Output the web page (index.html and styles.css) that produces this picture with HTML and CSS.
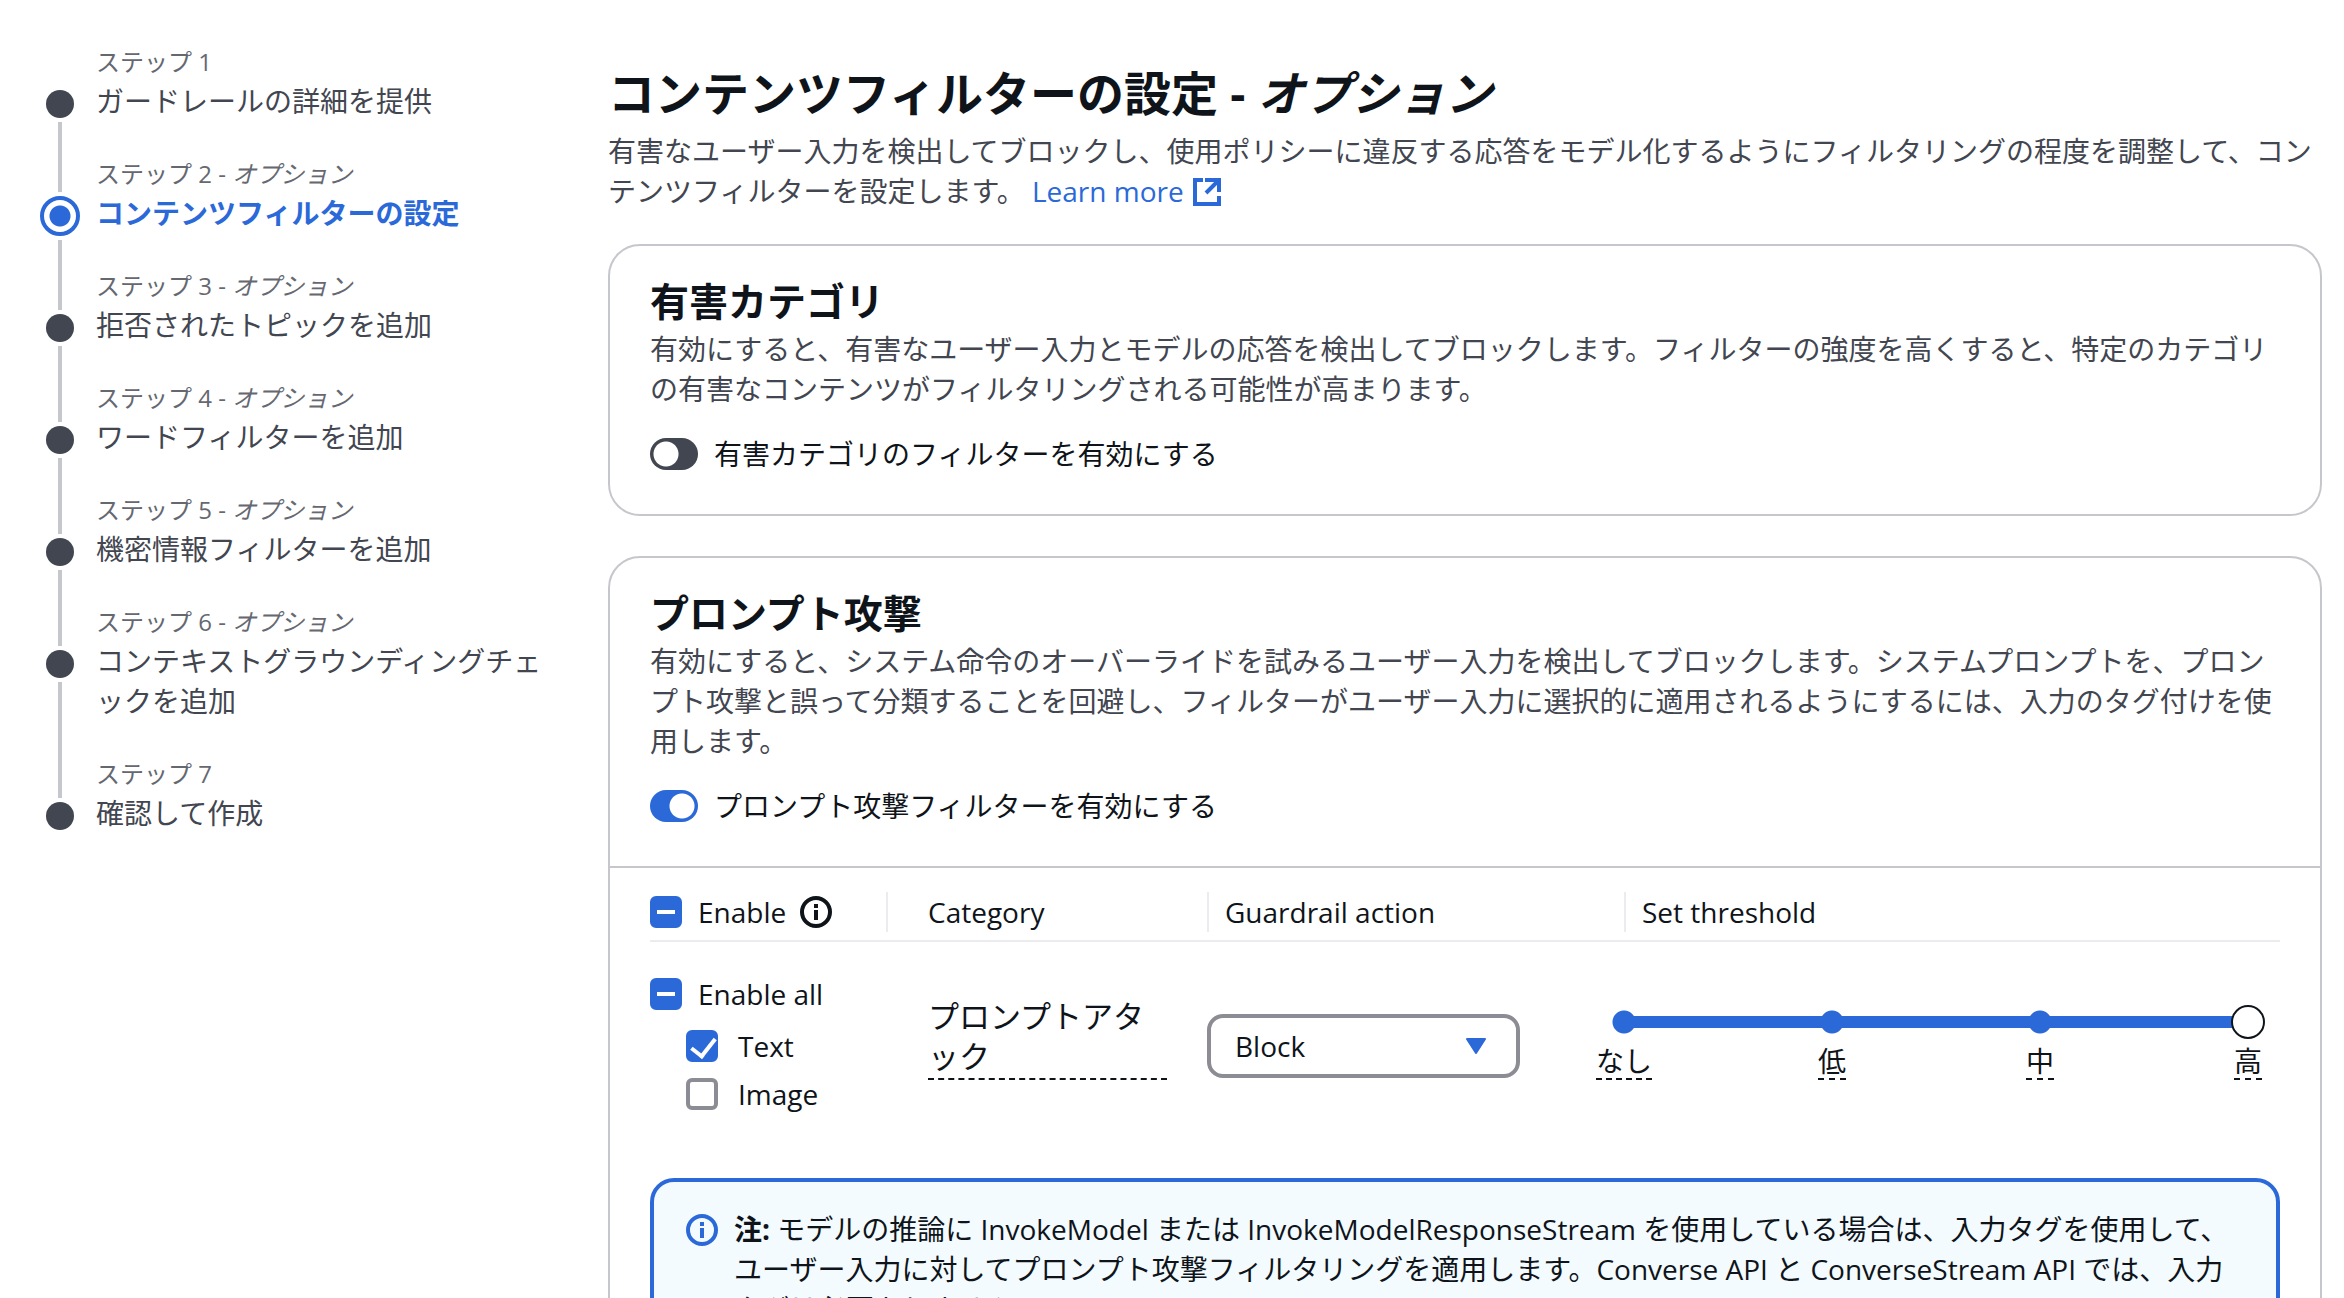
FILE: index.html
```html
<!DOCTYPE html>
<html lang="ja">
<head>
    <meta charset="UTF-8">
    <meta name="viewport" content="width=device-width, initial-scale=1.0">
    <title>コンテンツフィルターの設定</title>
    <link rel="stylesheet" href="styles.css">
</head>
<body>
    <div class="wizard">
        <nav class="steps">
            <ol>
                <li class="step">
                    <span class="marker"></span>
                    <div class="step-text">
                        <small>ステップ 1</small>
                        <a href="#">ガードレールの詳細を提供</a>
                    </div>
                </li>
                <li class="step active">
                    <span class="marker"></span>
                    <div class="step-text">
                        <small>ステップ 2 - <i>オプション</i></small>
                        <a href="#" aria-current="step">コンテンツフィルターの設定</a>
                    </div>
                </li>
                <li class="step">
                    <span class="marker"></span>
                    <div class="step-text">
                        <small>ステップ 3 - <i>オプション</i></small>
                        <a href="#">拒否されたトピックを追加</a>
                    </div>
                </li>
                <li class="step">
                    <span class="marker"></span>
                    <div class="step-text">
                        <small>ステップ 4 - <i>オプション</i></small>
                        <a href="#">ワードフィルターを追加</a>
                    </div>
                </li>
                <li class="step">
                    <span class="marker"></span>
                    <div class="step-text">
                        <small>ステップ 5 - <i>オプション</i></small>
                        <a href="#">機密情報フィルターを追加</a>
                    </div>
                </li>
                <li class="step">
                    <span class="marker"></span>
                    <div class="step-text">
                        <small>ステップ 6 - <i>オプション</i></small>
                        <a href="#">コンテキストグラウンディングチェックを追加</a>
                    </div>
                </li>
                <li class="step">
                    <span class="marker"></span>
                    <div class="step-text">
                        <small>ステップ 7</small>
                        <a href="#">確認して作成</a>
                    </div>
                </li>
            </ol>
        </nav>

        <main>
            <header class="page-header">
                <h1>コンテンツフィルターの設定 - <i>オプション</i></h1>
                <p>有害なユーザー入力を検出してブロックし、使用ポリシーに違反する応答をモデル化するようにフィルタリングの程度を調整して、コンテンツフィルターを設定します。 <a class="learn-more" href="#">Learn more
                    <svg viewBox="0 0 32 32" width="32" height="32"><path d="M12 4H4v24h24v-8M14 4h14v12M28 4L15 17"/></svg></a></p>
            </header>

            <section class="card">
                <div class="card-header">
                    <h2>有害カテゴリ</h2>
                    <p>有効にすると、有害なユーザー入力とモデルの応答を検出してブロックします。フィルターの強度を高くすると、特定のカテゴリの有害なコンテンツがフィルタリングされる可能性が高まります。</p>
                    <label class="toggle"><input type="checkbox" role="switch">有害カテゴリのフィルターを有効にする</label>
                </div>
            </section>

            <section class="card">
                <div class="card-header">
                    <h2>プロンプト攻撃</h2>
                    <p>有効にすると、システム命令のオーバーライドを試みるユーザー入力を検出してブロックします。システムプロンプトを、プロンプト攻撃と誤って分類することを回避し、フィルターがユーザー入力に選択的に適用されるようにするには、入力のタグ付けを使用します。</p>
                    <label class="toggle"><input type="checkbox" role="switch" checked>プロンプト攻撃フィルターを有効にする</label>
                </div>
                <div class="card-body">
                    <table>
                        <colgroup>
                            <col class="col-enable">
                            <col class="col-category">
                            <col class="col-action">
                            <col>
                        </colgroup>
                        <thead>
                            <tr>
                                <th>
                                    <div class="head">
                                        <label class="check"><input type="checkbox" class="mixed">Enable</label>
                                        <svg class="info" viewBox="0 0 32 32" width="32" height="32"><circle cx="16" cy="16" r="14"/><path d="M16 8v4M16 14v10"/></svg>
                                    </div>
                                </th>
                                <th><div class="head divided wide">Category</div></th>
                                <th><div class="head divided">Guardrail action</div></th>
                                <th><div class="head divided">Set threshold</div></th>
                            </tr>
                        </thead>
                        <tbody>
                            <tr>
                                <td class="cell-enable">
                                    <label class="check"><input type="checkbox" class="mixed">Enable all</label>
                                    <div class="sub-checks">
                                        <label class="check"><input type="checkbox" checked>Text</label>
                                        <label class="check"><input type="checkbox">Image</label>
                                    </div>
                                </td>
                                <td class="cell-category"><div class="category">プロンプトアタック</div></td>
                                <td class="cell-action">
                                    <div class="select">
                                        <select aria-label="Guardrail action">
                                            <option>Block</option>
                                        </select>
                                        <svg viewBox="0 0 20 16" width="20" height="16"><path d="M1 1h18l-9 14z"/></svg>
                                    </div>
                                </td>
                                <td class="cell-threshold">
                                    <div class="threshold">
                                        <div class="slider">
                                            <input type="range" min="0" max="3" value="3" aria-label="Set threshold">
                                        </div>
                                        <div class="slider-labels">
                                            <div><span>なし</span></div>
                                            <div><span>低</span></div>
                                            <div><span>中</span></div>
                                            <div><span>高</span></div>
                                        </div>
                                    </div>
                                </td>
                            </tr>
                        </tbody>
                    </table>

                    <div class="alert">
                        <svg class="info" viewBox="0 0 32 32" width="32" height="32"><circle cx="16" cy="16" r="14"/><path d="M16 8v4M16 14v10"/></svg>
                        <p><b>注:</b> モデルの推論に InvokeModel または InvokeModelResponseStream を使用している場合は、入力タグを使用して、ユーザー入力に対してプロンプト攻撃フィルタリングを適用します。Converse API と ConverseStream API では、入力タグは必要ありません。</p>
                    </div>
                </div>
            </section>
        </main>
    </div>

    <script>
        document.querySelectorAll('.mixed').forEach(box => {
            box.indeterminate = true;
        });
    </script>
</body>
</html>
```
FILE: styles.css
```css
* {
    box-sizing: border-box;
}
body {
    margin: 0;
    background-color: #fff;
    color: #0f141a;
    font-family: "Open Sans", "Noto Sans CJK JP", sans-serif;
    font-size: 28px;
    line-height: 40px;
}
h1, h2, p, ol {
    margin: 0;
    padding: 0;
}
a {
    color: inherit;
    text-decoration: none;
}
.wizard {
    display: flex;
    gap: 48px;
    padding: 46px 22px 40px 40px;
}
.steps {
    flex: 0 0 520px;
}
.steps ol {
    list-style: none;
}

/* step list */
.step {
    display: flex;
    gap: 16px;
    position: relative;
    color: #424650;
}
.step::before {
    content: "";
    position: absolute;
    left: 18px;
    top: 76px;
    bottom: -40px;
    width: 4px;
    background-color: #c6c6cd;
}
.step.active::before {
    top: 82px;
}
.step:last-child::before {
    display: none;
}
.marker {
    position: relative;
    flex: none;
    width: 28px;
    height: 28px;
    margin: 44px 6px 0;
    border-radius: 50%;
    background-color: #424650;
    box-shadow: 0 0 0 4px #fff;
}
.active .marker {
    width: 40px;
    height: 40px;
    margin: 38px 0 0;
    border: 4px solid #2b69d9;
    background: radial-gradient(circle, #2b69d9 10px, #fff 11px);
}
.step-text {
    padding-bottom: 37px;
}
.step small {
    display: block;
    margin-bottom: 3px;
    font-size: 24px;
    line-height: 32px;
    color: #656871;
}
.step a {
    display: block;
}
.active a {
    color: #2b69d9;
    font-weight: bold;
}

main {
    flex: 1;
    min-width: 0;
    display: flex;
    flex-direction: column;
    gap: 40px;
}
.page-header {
    padding-top: 17px;
    margin-bottom: -7px;
}
h1 {
    font-size: 47px;
    line-height: 60px;
    margin-bottom: 8px;
}
.page-header p, .card-header p {
    color: #424650;
}
.learn-more {
    color: #2b69d9;
    font-weight: 500;
}
.learn-more svg {
    vertical-align: -6px;
    fill: none;
    stroke: #2b69d9;
    stroke-width: 4;
}

.card {
    border: 2px solid #c6c6cd;
    border-radius: 32px;
}
.card-header {
    padding: 31px 40px 40px;
}
h2 {
    font-size: 39px;
    line-height: 48px;
    margin-bottom: 4px;
}
.toggle {
    display: flex;
    align-items: center;
    gap: 16px;
    margin-top: 25px;
}
.toggle input {
    appearance: none;
    width: 48px;
    height: 32px;
    margin: 0;
    border-radius: 16px;
    background: #424650 radial-gradient(circle at 16px 16px, #fff 12px, transparent 13px);
}
.toggle input:checked {
    background: #2b69d9 radial-gradient(circle at 32px 16px, #fff 12px, transparent 13px);
}
.card-body {
    padding: 0 40px 40px;
    border-top: 2px solid #c6c6cd;
}

/* filter table */
table {
    width: 100%;
    table-layout: fixed;
    border-collapse: separate;
    border-spacing: 0;
}
.col-enable {
    width: 236px;
}
.col-category {
    width: 321px;
}
.col-action {
    width: 417px;
}
th, td {
    padding: 0;
    text-align: left;
    vertical-align: top;
}
th {
    padding: 24px 0 8px;
    border-bottom: 2px solid #ebebf0;
    font-weight: 500;
}
.head {
    display: flex;
    align-items: center;
    gap: 14px;
    height: 40px;
}
.divided {
    padding-left: 16px;
    border-left: 2px solid #ebebf0;
}
.wide {
    padding-left: 40px;
}
.info {
    flex: none;
    fill: none;
    stroke: currentColor;
    stroke-width: 4;
}
.check {
    display: flex;
    align-items: center;
    gap: 16px;
    font-weight: 500;
}
.check input {
    appearance: none;
    position: relative;
    width: 32px;
    height: 32px;
    margin: 0;
    border: 4px solid #8c8c94;
    border-radius: 6px;
    background-color: #fff;
}
.check input:checked, .check input:indeterminate {
    border-color: #2b69d9;
    background-color: #2b69d9;
}
.check input:indeterminate::after {
    content: "";
    position: absolute;
    left: 3px;
    top: 10px;
    width: 18px;
    height: 4px;
    background-color: #fff;
}
.check input:checked::after {
    content: "";
    position: absolute;
    left: 6px;
    top: -1px;
    width: 11px;
    height: 20px;
    border: solid #fff;
    border-width: 0 4px 4px 0;
    transform: rotate(38deg);
}
.sub-checks {
    display: grid;
    gap: 8px;
    margin: 12px 0 0 36px;
}
.sub-checks .check {
    gap: 20px;
}
.cell-enable {
    padding-top: 32px;
}
.cell-category {
    padding: 54px 40px 0 42px;
}
.category {
    padding-bottom: 2px;
    border-bottom: 2px dashed #0f141a;
    font-size: 31px;
}
.cell-action {
    padding: 72px 104px 0 0;
}
.select {
    position: relative;
}
.select select {
    appearance: none;
    display: block;
    width: 100%;
    height: 64px;
    padding: 0 24px;
    border: 4px solid #8c8c94;
    border-radius: 16px;
    background-color: #fff;
    color: inherit;
    font: inherit;
    font-weight: 500;
}
.select svg {
    position: absolute;
    right: 34px;
    top: 24px;
    fill: #2b69d9;
    stroke: #2b69d9;
    stroke-width: 2;
    stroke-linejoin: round;
    pointer-events: none;
}
.cell-threshold {
    padding: 63px 4px 0 0;
}
.threshold {
    margin-left: -28px;
}
.slider {
    height: 34px;
    margin: 0 16px;
    background:
        radial-gradient(circle, #2b69d9 11px, transparent 12px) 0 50% / 24px 24px,
        radial-gradient(circle, #2b69d9 11px, transparent 12px) 33.33% 50% / 24px 24px,
        radial-gradient(circle, #2b69d9 11px, transparent 12px) 66.67% 50% / 24px 24px,
        linear-gradient(#2b69d9, #2b69d9) 50% 50% / calc(100% - 24px) 12px;
    background-repeat: no-repeat;
}
.slider input {
    appearance: none;
    display: block;
    width: calc(100% + 10px);
    height: 34px;
    margin: 0 -5px;
    background: none;
}
.slider input::-webkit-slider-thumb {
    appearance: none;
    width: 34px;
    height: 34px;
    border: 2px solid #0f141a;
    border-radius: 50%;
    background-color: #fff;
}
.slider-labels {
    display: flex;
    justify-content: space-between;
    margin-top: 5px;
    line-height: 34px;
}
.slider-labels div {
    width: 56px;
    text-align: center;
}
.slider-labels span {
    display: inline-block;
    border-bottom: 2px dashed #0f141a;
}

.alert {
    display: flex;
    gap: 16px;
    margin-top: 64px;
    padding: 27px 36px 27px 32px;
    border: 4px solid #2b69d9;
    border-radius: 24px;
    background-color: #f3fbff;
}
.alert .info {
    margin-top: 5px;
    color: #2b69d9;
}
```
